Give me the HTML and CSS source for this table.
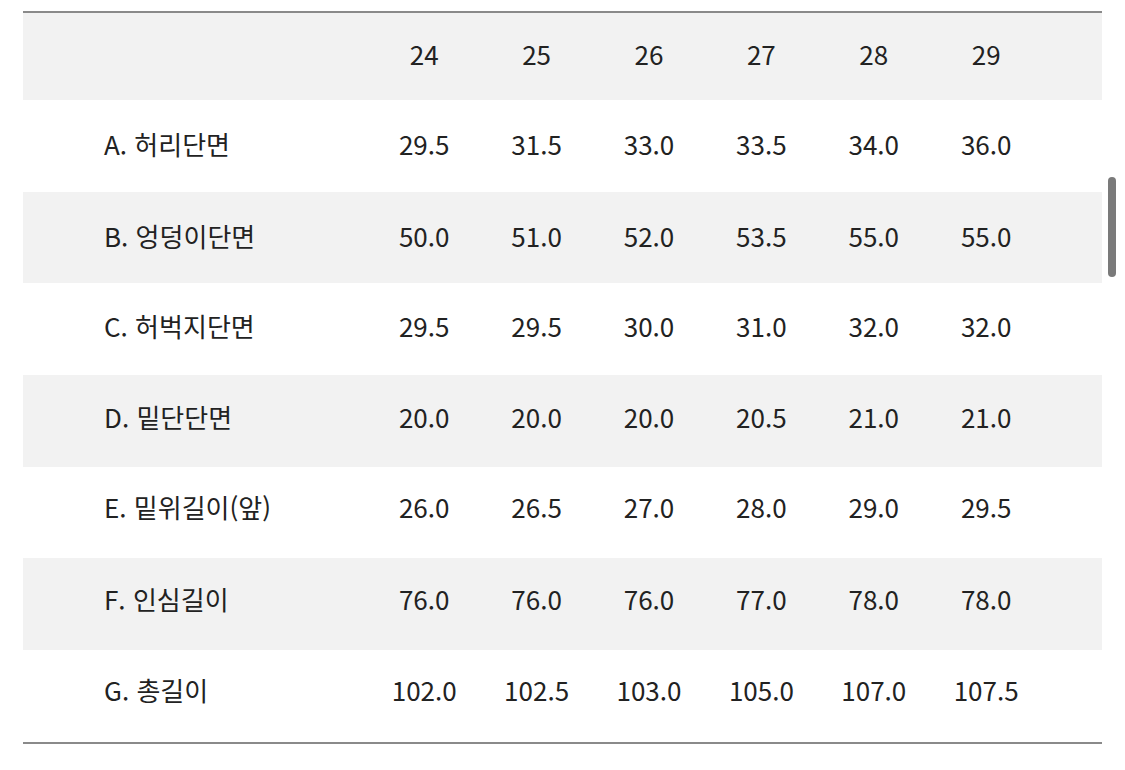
FILE: index.html
```html
<!DOCTYPE html>
<html lang="ko">
<head>
<meta charset="utf-8">
<link rel="stylesheet" href="styles.css">
</head>
<body>
<div class="page">
  <table class="size-table">
    <colgroup>
      <col class="col-label">
      <col class="col-num"><col class="col-num"><col class="col-num">
      <col class="col-num"><col class="col-num"><col class="col-num">
      <col class="col-pad">
    </colgroup>
    <thead>
      <tr class="shade head">
        <th></th><th>24</th><th>25</th><th>26</th><th>27</th><th>28</th><th>29</th><th></th>
      </tr>
    </thead>
    <tbody>
      <tr class="r1"><td class="label">A. 허리단면</td><td>29.5</td><td>31.5</td><td>33.0</td><td>33.5</td><td>34.0</td><td>36.0</td><td></td></tr>
      <tr class="shade r1"><td class="label">B. 엉덩이단면</td><td>50.0</td><td>51.0</td><td>52.0</td><td>53.5</td><td>55.0</td><td>55.0</td><td></td></tr>
      <tr class="r2"><td class="label">C. 허벅지단면</td><td>29.5</td><td>29.5</td><td>30.0</td><td>31.0</td><td>32.0</td><td>32.0</td><td></td></tr>
      <tr class="shade r2"><td class="label">D. 밑단단면</td><td>20.0</td><td>20.0</td><td>20.0</td><td>20.5</td><td>21.0</td><td>21.0</td><td></td></tr>
      <tr class="r3"><td class="label">E. 밑위길이(앞)</td><td>26.0</td><td>26.5</td><td>27.0</td><td>28.0</td><td>29.0</td><td>29.5</td><td></td></tr>
      <tr class="shade r3"><td class="label">F. 인심길이</td><td>76.0</td><td>76.0</td><td>76.0</td><td>77.0</td><td>78.0</td><td>78.0</td><td></td></tr>
      <tr class="r3"><td class="label">G. 총길이</td><td>102.0</td><td>102.5</td><td>103.0</td><td>105.0</td><td>107.0</td><td>107.5</td><td></td></tr>
    </tbody>
  </table>
  <div class="scrollbar"></div>
</div>
</body>
</html>
```
FILE: styles.css
```css
html, body {
  margin: 0;
  padding: 0;
  background: #ffffff;
}
.page {
  position: relative;
  width: 1125px;
  height: 770px;
  padding: 11px 0 0 23px;
  box-sizing: border-box;
}
.size-table {
  width: 1079px;
  table-layout: fixed;
  border-collapse: collapse;
  border-top: 2px solid #8a8a8a;
  border-bottom: 2px solid #8a8a8a;
  font-family: "Noto Sans CJK KR", "Noto Sans", sans-serif;
  font-size: 26px;
  color: #222222;
}
.col-label { width: 345px; }
.col-num { width: 112.4px; }
.col-pad { width: auto; }
.size-table th,
.size-table td {
  padding: 0;
  text-align: center;
  font-weight: 400;
  white-space: nowrap;
}
.size-table tr.head th {
  height: 81px;
  padding-bottom: 6px;
}
.size-table tr.r1 td { height: 87.7px; padding-bottom: 4px; }
.size-table tr.r2 td { height: 83.7px; padding-bottom: 8px; }
.size-table tr.r3 td { height: 79.7px; padding-bottom: 12px; }
.size-table td.label {
  text-align: left;
  padding-left: 81px;
}
.shade {
  background: #f2f2f2;
}
.scrollbar {
  position: absolute;
  left: 1108px;
  top: 177px;
  width: 8px;
  height: 100px;
  border-radius: 4px;
  background: #7a7a7a;
}
```
